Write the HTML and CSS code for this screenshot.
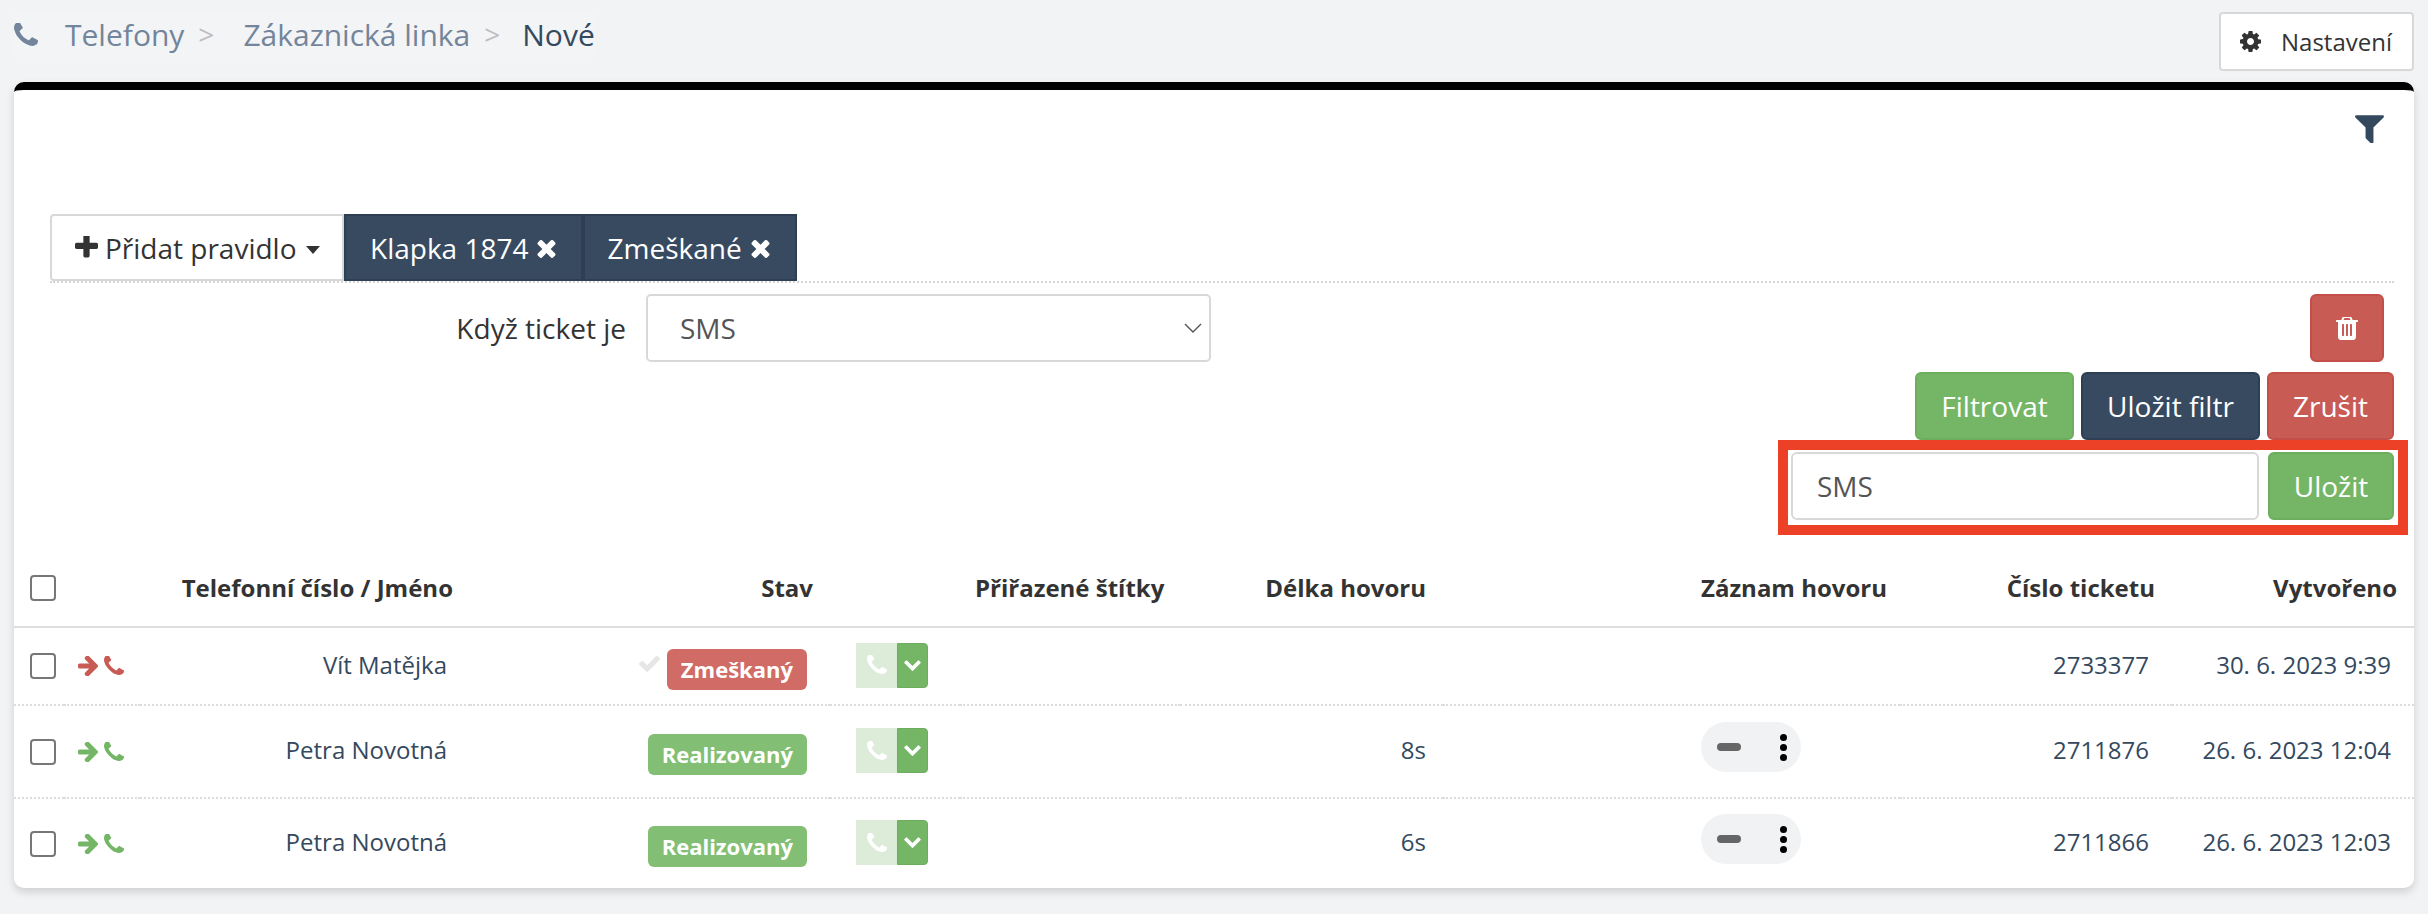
FILE: index.html
```html
<!DOCTYPE html>
<html lang="cs">
<head>
<meta charset="utf-8">
<title>Telefony</title>
<link rel="stylesheet" href="styles.css">
</head>
<body>
<svg class="sprite" width="0" height="0" aria-hidden="true">
  <symbol id="i-phone" viewBox="192 192 1408 1408"><path d="M1600 1240q0 27-10 70.5t-21 68.5q-21 50-122 106-94 51-186 51-27 0-53-3.5t-57.5-12.5-47-14.5-55.5-20.5-49-18q-98-35-175-83-127-79-264-216t-216-264q-48-77-83-175-3-9-18-49t-20.5-55.5-14.5-47-12.5-57.5-3.5-53q0-92 51-186 56-101 106-122 25-11 68.5-21t70.5-10q14 0 21 3 18 6 53 76 11 19 30 54t35 63.5 31 53.5q3 4 17.5 25t21.5 35.5 7 28.5q0 20-28.5 50t-62 55-62 53-28.5 46q0 9 5 22.5t8.5 20.5 14 24 11.5 19q76 137 174 235t235 174q2 1 19 11.5t24 14 20.5 8.5 22.5 5q18 0 46-28.5t53-62 55-62 50-28.5q14 0 28.5 7t35.5 21.5 25 17.5q25 15 53.5 31t63.5 35 54 30q70 35 76 53 3 7 3 21z"/></symbol>
  <symbol id="i-cog" viewBox="128 128 1536 1536"><path d="M1152 896q0-106-75-181t-181-75-181 75-75 181 75 181 181 75 181-75 75-181zm512-109v222q0 12-8 23t-20 13l-185 28q-19 54-39 91 35 50 107 138 10 12 10 25t-9 23q-27 37-99 108t-94 71q-12 0-26-9l-138-108q-44 23-91 38-16 136-29 186-7 28-36 28h-222q-14 0-24.5-8.5t-11.5-21.5l-28-184q-49-16-90-37l-141 107q-10 9-25 9-14 0-25-11-126-114-165-168-7-10-7-23 0-12 8-23 15-21 51-66.5t54-70.5q-27-50-41-99l-183-27q-13-2-21-12.5t-8-23.5v-222q0-12 8-23t19-13l186-28q14-46 39-92-40-57-107-138-10-12-10-24 0-10 9-23 26-36 98.5-107.5t94.5-71.5q13 0 26 10l138 107q44-23 91-38 16-136 29-186 7-28 36-28h222q14 0 24.5 8.5t11.5 21.5l28 184q49 16 90 37l142-107q9-9 24-9 13 0 25 10 129 119 165 170 7 8 7 22 0 12-8 23-15 21-51 66.5t-54 70.5q26 50 41 98l183 28q13 2 21 12.5t8 23.5z"/></symbol>
  <symbol id="i-filter" viewBox="190 256 1412 1344"><path d="M1595 295q17 41-14 70l-493 493v742q0 42-39 59-13 5-25 5-27 0-45-19l-256-256q-19-19-19-45v-486l-493-493q-31-29-14-70 17-39 59-39h1280q42 0 59 39z"/></symbol>
  <symbol id="i-trash" viewBox="192 192 1408 1472"><path d="M704 1376v-704q0-14-9-23t-23-9h-64q-14 0-23 9t-9 23v704q0 14 9 23t23 9h64q14 0 23-9t9-23zm256 0v-704q0-14-9-23t-23-9h-64q-14 0-23 9t-9 23v704q0 14 9 23t23 9h64q14 0 23-9t9-23zm256 0v-704q0-14-9-23t-23-9h-64q-14 0-23 9t-9 23v704q0 14 9 23t23 9h64q14 0 23-9t9-23zm-544-992h448l-48-117q-7-9-17-11h-317q-10 2-17 11zm928 32v64q0 14-9 23t-23 9h-96v948q0 83-47 143.5t-113 60.5h-832q-66 0-113-58.5t-47-141.5v-952h-96q-14 0-23-9t-9-23v-64q0-14 9-23t23-9h309l70-167q15-37 54-63t79-26h320q40 0 79 26t54 63l70 167h309q14 0 23 9t9 23z"/></symbol>
  <symbol id="i-plus" viewBox="192 192 1408 1408"><path d="M1600 736v192q0 40-28 68t-68 28h-416v416q0 40-28 68t-68 28h-192q-40 0-68-28t-28-68v-416h-416q-40 0-68-28t-28-68v-192q0-40 28-68t68-28h416v-416q0-40 28-68t68-28h192q40 0 68 28t28 68v416h416q40 0 68 28t28 68z" transform="translate(0 -32)"/></symbol>
  <symbol id="i-remove" viewBox="280 240 1232 1312"><path d="M1490 1322q0 40-28 68l-136 136q-28 28-68 28t-68-28l-294-294-294 294q-28 28-68 28t-68-28l-136-136q-28-28-28-68t28-68l294-294-294-294q-28-28-28-68t28-68l136-136q28-28 68-28t68 28l294 294 294-294q28-28 68-28t68 28l136 136q28 28 28 68t-28 68l-294 294 294 294q28 28 28 68z"/></symbol>
  <symbol id="i-arrow" viewBox="128 192 1472 1408"><path d="M1600 960q0 54-37 91l-651 651q-39 37-91 37-51 0-90-37l-75-75q-38-38-38-91t38-91l293-293h-704q-52 0-84.5-37.5t-32.5-90.5v-128q0-53 32.5-90.5t84.5-37.5h704l-293-294q-38-36-38-90t38-90l75-75q38-38 90-38 53 0 91 38l651 651q37 35 37 90z" transform="translate(0 -64)"/></symbol>
  <symbol id="i-check" viewBox="120 280 1552 1180"><path d="M1671 566q0 40-28 68l-724 724-136 136q-28 28-68 28t-68-28l-136-136-362-362q-28-28-28-68t28-68l136-136q28-28 68-28t68 28l294 295 656-657q28-28 68-28t68 28l136 136q28 28 28 68z" transform="translate(0 -64)"/></symbol>
  <symbol id="i-chevron" viewBox="90 510 1612 1060"><path d="M1683 808l-742 741q-19 19-45 19t-45-19l-742-741q-19-19-19-45.5t19-45.5l166-165q19-19 45-19t45 19l531 531 531-531q19-19 45-19t45 19l166 165q19 19 19 45.5t-19 45.5z"/></symbol>
</svg>

<div class="page">
  <header class="top">
    <nav class="crumbs">
      <svg class="crumb-icon"><use href="#i-phone"/></svg>
      <a class="crumb">Telefony</a><span class="sep">&gt;</span>
      <a class="crumb">Zákaznická linka</a><span class="sep sep-last">&gt;</span>
      <span class="crumb-now">Nové</span>
    </nav>
    <button class="btn-settings"><svg class="cog"><use href="#i-cog"/></svg>Nastavení</button>
  </header>

  <main class="card">
    <div class="filters">
      <div class="filter-toggle"><svg class="funnel"><use href="#i-filter"/></svg></div>

      <div class="rule-tabs">
        <button class="tab-add"><svg class="plus"><use href="#i-plus"/></svg>Přidat pravidlo<span class="caret"></span></button>
        <button class="tab">Klapka 1874<svg class="x"><use href="#i-remove"/></svg></button>
        <button class="tab">Zmeškané<svg class="x"><use href="#i-remove"/></svg></button>
      </div>

      <div class="rule-row">
        <label class="rule-label" for="rule">Když ticket je</label>
        <select class="rule-select" id="rule"><option>SMS</option></select>
        <button class="btn btn-red btn-trash"><svg class="trash"><use href="#i-trash"/></svg></button>
      </div>

      <div class="actions">
        <button class="btn btn-green btn-filter">Filtrovat</button>
        <button class="btn btn-navy btn-savefilter">Uložit filtr</button>
        <button class="btn btn-red btn-cancel">Zrušit</button>
      </div>

      <div class="save-row">
        <input class="name-input" type="text" value="SMS">
        <button class="btn btn-green btn-save">Uložit</button>
        <span class="highlight"></span>
      </div>
    </div>

    <table class="calls">
      <colgroup>
        <col class="c1"><col class="c2"><col class="c3"><col class="c4"><col class="c5">
        <col class="c6"><col class="c7"><col class="c8"><col class="c9"><col class="c10">
      </colgroup>
      <thead>
        <tr>
          <th class="cell-check"><input class="check" type="checkbox"></th>
          <th></th>
          <th class="right">Telefonní číslo / Jméno</th>
          <th class="right">Stav</th>
          <th></th>
          <th class="tags">Přiřazené štítky</th>
          <th class="right">Délka hovoru</th>
          <th class="rec">Záznam hovoru</th>
          <th class="right">Číslo ticketu</th>
          <th class="right">Vytvořeno</th>
        </tr>
      </thead>
      <tbody>
        <tr class="r1 missed">
          <td class="cell-check"><input class="check" type="checkbox"></td>
          <td class="dir"><svg class="arrow"><use href="#i-arrow"/></svg><svg class="phone"><use href="#i-phone"/></svg></td>
          <td class="right">Vít Matějka</td>
          <td class="right status"><svg class="tick"><use href="#i-check"/></svg><span class="badge badge-red">Zmeškaný</span></td>
          <td class="call"><div class="split"><span class="split-phone"><svg><use href="#i-phone"/></svg></span><span class="split-more"><svg><use href="#i-chevron"/></svg></span></div></td>
          <td></td>
          <td class="right dur"></td>
          <td class="rec"></td>
          <td class="right">2733377</td>
          <td class="right">30. 6. 2023 9:39</td>
        </tr>
        <tr class="r2 done">
          <td class="cell-check"><input class="check" type="checkbox"></td>
          <td class="dir"><svg class="arrow"><use href="#i-arrow"/></svg><svg class="phone"><use href="#i-phone"/></svg></td>
          <td class="right">Petra Novotná</td>
          <td class="right status"><span class="badge badge-green">Realizovaný</span></td>
          <td class="call"><div class="split"><span class="split-phone"><svg><use href="#i-phone"/></svg></span><span class="split-more"><svg><use href="#i-chevron"/></svg></span></div></td>
          <td></td>
          <td class="right dur">8s</td>
          <td class="rec"><div class="player"><span class="bar"></span><span class="dots"><i></i><i></i><i></i></span></div></td>
          <td class="right">2711876</td>
          <td class="right">26. 6. 2023 12:04</td>
        </tr>
        <tr class="r3 done">
          <td class="cell-check"><input class="check" type="checkbox"></td>
          <td class="dir"><svg class="arrow"><use href="#i-arrow"/></svg><svg class="phone"><use href="#i-phone"/></svg></td>
          <td class="right">Petra Novotná</td>
          <td class="right status"><span class="badge badge-green">Realizovaný</span></td>
          <td class="call"><div class="split"><span class="split-phone"><svg><use href="#i-phone"/></svg></span><span class="split-more"><svg><use href="#i-chevron"/></svg></span></div></td>
          <td></td>
          <td class="right dur">6s</td>
          <td class="rec"><div class="player"><span class="bar"></span><span class="dots"><i></i><i></i><i></i></span></div></td>
          <td class="right">2711866</td>
          <td class="right">26. 6. 2023 12:03</td>
        </tr>
      </tbody>
    </table>
  </main>
</div>
</body>
</html>
```

FILE: styles.css
```css
* { box-sizing: border-box; }
html, body { margin: 0; height: 100%; }
body {
  background: #f1f3f5;
  font-family: "Open Sans", "Noto Sans", sans-serif;
  font-size: 24px;
  color: #34495e;
  overflow: hidden;
}
svg { fill: currentColor; display: block; }
.sprite { position: absolute; }
button { font: inherit; cursor: pointer; }

.page { width: 2428px; padding: 12px 14px 0; }

/* top */
.top { display: flex; justify-content: space-between; align-items: flex-start; height: 70px; }
.crumbs {
  display: flex; align-items: center;
  height: 44px; margin-top: 1px; padding-right: 1px;
  background: #f3f4f6;
  font-size: 30px;
}
.crumb-icon { width: 24px; height: 24px; color: #73859a; margin-right: 27px; }
.crumb { color: #73859a; padding-bottom: 2px; }
.sep { color: #bdbdbd; font-size: 28px; margin: 0 29px 0 14px; padding-bottom: 2px; }
.sep-last { margin-right: 22px; }
.crumb-now { color: #34495e; padding-bottom: 2px; }
.btn-settings {
  display: flex; align-items: center;
  width: 195px; height: 59px; padding: 0 0 0 19px;
  background: #fff; border: 2px solid #d8d8d8; border-radius: 4px;
  color: #333; font-size: 24px;
}
.cog { width: 21px; height: 21px; margin-right: 20px; }

/* card */
.card {
  width: 2400px; height: 806px;
  background: #fff;
  border-top: 8px solid #000;
  border-radius: 10px;
  box-shadow: 0 4px 8px rgba(0, 0, 0, .15);
}
.filters { padding: 0 20px 0 36px; height: 459px; }
.filter-toggle { display: flex; justify-content: flex-end; height: 124px; padding: 25px 10px 0 0; color: #34495e; }
.funnel { width: 29px; height: 28px; }

.rule-tabs { display: flex; height: 69px; border-bottom: 2px dotted #d5d5d5; }
.tab-add {
  display: flex; align-items: center;
  width: 294px; height: 67px; padding: 0 0 0 23px;
  background: #fff; border: 2px solid #d8d8d8; border-radius: 4px 0 0 4px;
  color: #333; font-size: 28px;
}
.plus { width: 23px; height: 23px; margin-right: 7px; }
.caret {
  margin-left: 9px; margin-top: 4px;
  border-top: 8px solid #333; border-left: 7px solid transparent; border-right: 7px solid transparent;
}
.tab {
  display: flex; align-items: center;
  height: 67px; padding: 0 25px 0 24px;
  background: #384a60; border: 2px solid #2f3f53; color: #fff; font-size: 28px;
}
.tab + .tab { padding-left: 22px; }
.x { width: 19px; height: 20px; margin-left: 9px; }

.rule-row { display: flex; align-items: flex-start; margin-top: 11px; height: 68px; }
.rule-label { width: 576px; margin-right: 20px; line-height: 68px; text-align: right; font-size: 28px; color: #333; }
.rule-select {
  width: 565px; height: 68px; padding: 0 24px 0 32px;
  appearance: none;
  background: #fff url("data:image/svg+xml,%3Csvg xmlns='http://www.w3.org/2000/svg' width='18' height='11' viewBox='0 0 18 11'%3E%3Cpath d='M1 1l8 8 8-8' fill='none' stroke='%23555' stroke-width='1.4'/%3E%3C/svg%3E") no-repeat right 7px center;
  border: 2px solid #d8d8d8; border-radius: 5px;
  font: inherit; font-size: 28px; color: #555;
}
.btn-trash { width: 74px; margin-left: auto; margin-right: 10px; display: flex; align-items: center; justify-content: center; }
.trash { width: 22px; height: 23px; }

.btn {
  height: 68px; padding: 0;
  border: 2px solid; border-radius: 6px;
  color: #fff; font-size: 28px;
}
.btn-green { background: #74b666; border-color: #6cae5e; }
.btn-red { background: #c95b55; border-color: #c44f49; }
.btn-navy { background: #384a60; border-color: #2f3f53; }
.actions { display: flex; justify-content: flex-end; gap: 7px; margin-top: 10px; }
.btn-filter { width: 159px; }
.btn-savefilter { width: 179px; }
.btn-cancel { width: 127px; }

.save-row { position: relative; display: flex; justify-content: flex-end; gap: 9px; margin-top: 12px; }
.name-input {
  width: 468px; height: 68px; padding: 0 24px;
  border: 2px solid #d8d8d8; border-radius: 6px;
  font: inherit; font-size: 28px; color: #555;
  outline: 0;
}
.btn-save { width: 126px; }
.highlight {
  position: absolute; right: -14px; top: -12px;
  width: 630px; height: 95px;
  border: 10px solid #ec4126;
  pointer-events: none;
}

/* table */
.calls { width: 2400px; table-layout: fixed; border-collapse: collapse; }
.c1 { width: 50px; } .c2 { width: 76px; } .c3 { width: 330px; } .c4 { width: 360px; } .c5 { width: 130px; }
.c6 { width: 220px; } .c7 { width: 263px; } .c8 { width: 457px; } .c9 { width: 272px; } .c10 { width: 242px; }
.calls th { height: 78px; border-bottom: 2px solid #dedede; padding: 0 17px 0 0; color: #333; font-weight: 700; text-align: left; vertical-align: middle; white-space: nowrap; }
.calls td { padding: 0 23px 4px 0; vertical-align: middle; white-space: nowrap; border-bottom: 2px dotted #dcdcdc; }
.calls tr:last-child td { border-bottom: 0; }
.r1 td { height: 78px; } .r2 td { height: 93px; } .r3 td { height: 90px; }
.calls .right { text-align: right; }
.calls td.dur { padding-right: 17px; }
.calls .tags { padding-left: 15px; }
.calls .rec { padding: 0 0 0 258px; }
.calls .cell-check { padding: 0 0 0 16px; }
.check {
  appearance: none; display: block; margin: 0;
  width: 26px; height: 26px;
  background: #fff; border: 2px solid #777; border-radius: 4px;
}
.calls .dir { padding: 0 0 0 14px; }
.dir { font-size: 0; }
.dir svg { display: inline-block; vertical-align: middle; }
.arrow { width: 20px; height: 20px; margin-right: 6px; }
.phone { width: 20px; height: 20px; }
.missed .dir { color: #c95b55; }
.done .dir { color: #74b666; }

.status svg, .status .badge { display: inline-block; vertical-align: middle; }
.tick { width: 21px; height: 18px; color: #e6e6e6; margin-right: 7px; }
.badge {
  display: inline-block; height: 41px; margin-top: 10px; padding: 0 14px;
  line-height: 40px; border-radius: 6px;
  color: #fff; font-size: 22px; font-weight: 700;
}
.badge-red { background: #d16b65; }
.badge-green { background: #82bf74; }
.calls td.call { padding: 0 0 0 26px; }
.split { display: flex; width: 72px; height: 45px; margin-top: -2px; }
.split-phone { display: flex; align-items: center; justify-content: center; width: 41px; background: #dcecd9; color: #fff; }
.split-phone svg { width: 20px; height: 20px; }
.split-more { display: flex; align-items: center; justify-content: center; width: 31px; background: #74b666; border: 1px solid #6cae5e; border-radius: 0 4px 4px 0; color: #fff; }
.split-more svg { width: 17px; height: 11px; }

.player {
  display: flex; align-items: center; justify-content: space-between;
  width: 100px; height: 50px; margin-top: -9px; padding: 0 16px;
  background: #f1f2f4; border-radius: 25px;
}
.bar { width: 24px; height: 8px; background: #666; border-radius: 4px; }
.dots { display: flex; flex-direction: column; gap: 3px; margin-right: -2px; }
.dots i { display: block; width: 7px; height: 7px; background: #000; border-radius: 50%; }
```
